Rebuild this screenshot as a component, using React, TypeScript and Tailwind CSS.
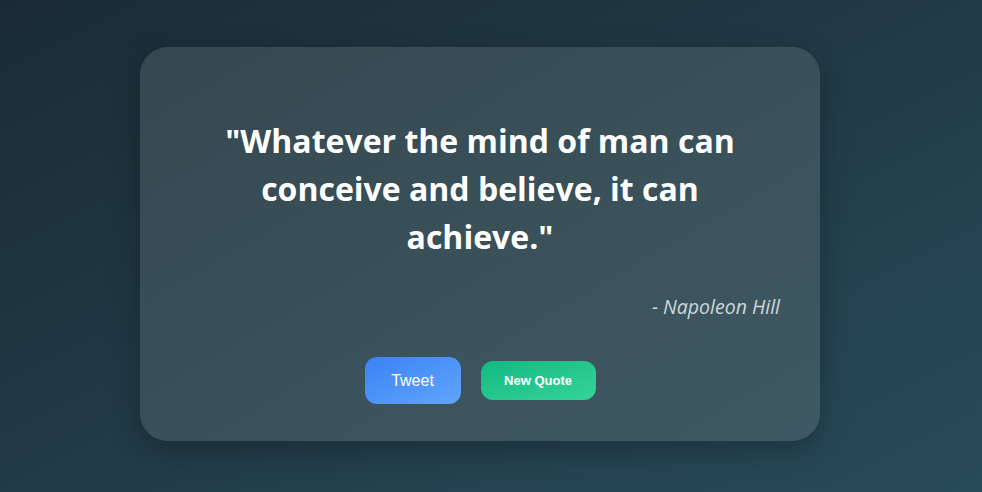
export default function App() {
  return (
    <div className="flex h-[492px] w-full items-start bg-gradient-to-br from-[#1a2b35] to-[#284b59] pl-[140px] pt-[47px]">
      <div className="flex w-[680px] flex-col rounded-[28px] bg-gradient-to-br from-[#354850] to-[#3e5963] px-10 pb-[37px] pt-[70px] shadow-[0_10px_30px_rgba(0,0,0,0.25)]">
        <p className="text-center text-[32px] font-bold leading-[48px] text-white [font-family:'Open_Sans',sans-serif]">
          "Whatever the mind of man can
          <br />
          conceive and believe, it can
          <br />
          achieve."
        </p>
        <p className="mt-[32px] text-right text-[19.5px] italic leading-[28px] text-[#cfd8dc] [font-family:'Open_Sans',sans-serif]">
          - Napoleon Hill
        </p>
        <div className="mt-[36px] flex items-center justify-center gap-5">
          <button className="h-[47px] w-[96px] rounded-xl bg-gradient-to-br from-[#3b82f6] to-[#60a5fa] text-[16px] font-medium text-white [font-family:'Liberation_Sans',Arial,sans-serif]">
            Tweet
          </button>
          <button className="h-[39px] w-[115px] rounded-xl bg-gradient-to-br from-[#10b981] to-[#34d399] text-[13px] font-bold text-white [font-family:'Liberation_Sans',Arial,sans-serif]">
            New Quote
          </button>
        </div>
      </div>
    </div>
  )
}
